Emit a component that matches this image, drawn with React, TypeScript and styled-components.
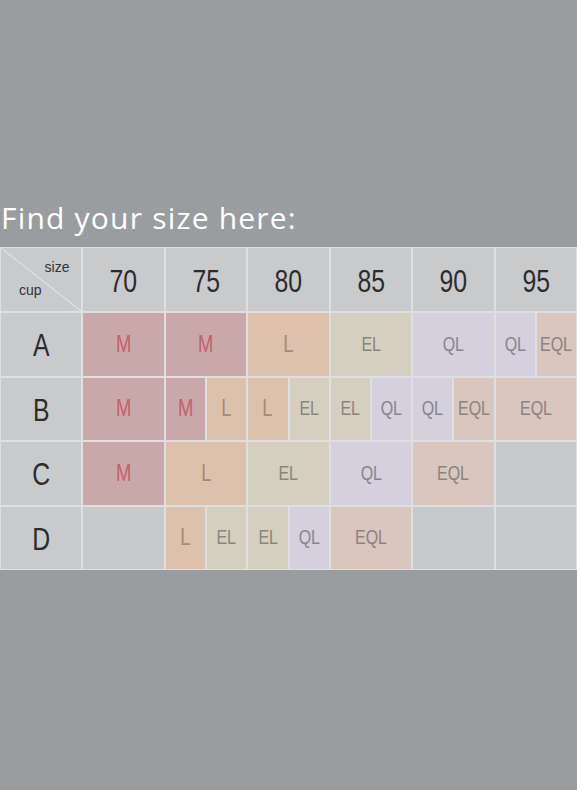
import { FC } from 'react';
import styled, { createGlobalStyle } from 'styled-components';

type Size = 'M' | 'L' | 'EL' | 'QL' | 'EQL';

const fills: Record<Size, { bg: string; fg: string; fs: number }> = {
  M: { bg: '#c9a8a9', fg: '#c4616d', fs: 23 },
  L: { bg: '#dcc1ac', fg: '#a98877', fs: 23 },
  EL: { bg: '#d4cfbe', fg: '#87867f', fs: 20 },
  QL: { bg: '#d6cfdd', fg: '#88858f', fs: 20 },
  EQL: { bg: '#d8c6bf', fg: '#8b837f', fs: 20 },
};

const sizes = ['70', '75', '80', '85', '90', '95'];

const rows: { cup: string; cells: Size[][] }[] = [
  { cup: 'A', cells: [['M'], ['M'], ['L'], ['EL'], ['QL'], ['QL', 'EQL']] },
  {
    cup: 'B',
    cells: [['M'], ['M', 'L'], ['L', 'EL'], ['EL', 'QL'], ['QL', 'EQL'], ['EQL']],
  },
  { cup: 'C', cells: [['M'], ['L'], ['EL'], ['QL'], ['EQL'], []] },
  { cup: 'D', cells: [[], ['L', 'EL'], ['EL', 'QL'], ['EQL'], [], []] },
];

const App: FC = () => {
  return (
    <Page>
      <GlobalStyle />
      <Title>Find your size here:</Title>
      <Chart>
        <Corner>
          <SizeTag>size</SizeTag>
          <CupTag>cup</CupTag>
        </Corner>
        {sizes.map((s) => (
          <HeadCell key={s}>
            <Narrow>{s}</Narrow>
          </HeadCell>
        ))}
        {rows.map((row) => [
          <HeadCell key={row.cup}>
            <Narrow>{row.cup}</Narrow>
          </HeadCell>,
          ...row.cells.map((cell, i) => (
            <Cell key={row.cup + i}>
              {cell.length === 0 && <Empty />}
              {cell.map((size, j) => (
                <Segment key={j} $size={size}>
                  <Narrow>{size}</Narrow>
                </Segment>
              ))}
            </Cell>
          )),
        ])}
      </Chart>
    </Page>
  );
};

export default App;

const GlobalStyle = createGlobalStyle`
  html, body {
    margin: 0;
    padding: 0;
    background: #9a9d9f;
  }
`;

const Page = styled.div`
  width: 577px;
  min-height: 790px;
  padding-top: 200px;
  box-sizing: border-box;
  background: #9a9d9f;
`;

const Title = styled.h1`
  margin: 0 0 11px 1px;
  font-family: 'Open Sans', sans-serif;
  font-weight: 400;
  font-size: 30px;
  line-height: 36px;
  letter-spacing: 1.2px;
  color: #ffffff;
`;

const Chart = styled.div`
  display: grid;
  grid-template-columns: repeat(7, 1fr);
  grid-template-rows: 63px repeat(4, 62.5px);
  gap: 2px;
  border: 1px solid #dedfe0;
  background: #dedfe0;
  font-family: 'Liberation Sans', Arial, sans-serif;
`;

const Narrow = styled.span`
  display: inline-block;
  transform: scaleX(0.8);
`;

const Corner = styled.div`
  display: flex;
  flex-direction: column;
  justify-content: space-between;
  padding: 12px 12px 14px 18px;
  font-size: 14px;
  line-height: 1;
  color: #333;
  background:
    linear-gradient(
      to top right,
      transparent calc(50% - 1px),
      #e4e5e6 50%,
      transparent calc(50% + 1px)
    ),
    #c9cacc;
`;

const SizeTag = styled.span`
  align-self: flex-end;
`;

const CupTag = styled.span`
  align-self: flex-start;
`;

const HeadCell = styled.div`
  display: flex;
  align-items: center;
  justify-content: center;
  padding-top: 4px;
  background: #c9cacc;
  color: #2c2c2c;
  font-size: 31px;
`;

const Cell = styled.div`
  display: flex;
  gap: 2px;
`;

const Empty = styled.div`
  flex: 1;
  background: #c8c9cb;
`;

const Segment = styled.div<{ $size: Size }>`
  flex: 1;
  display: flex;
  align-items: center;
  justify-content: center;
  min-width: 0;
  background: ${({ $size }) => fills[$size].bg};
  color: ${({ $size }) => fills[$size].fg};
  font-size: ${({ $size }) => fills[$size].fs}px;
`;
